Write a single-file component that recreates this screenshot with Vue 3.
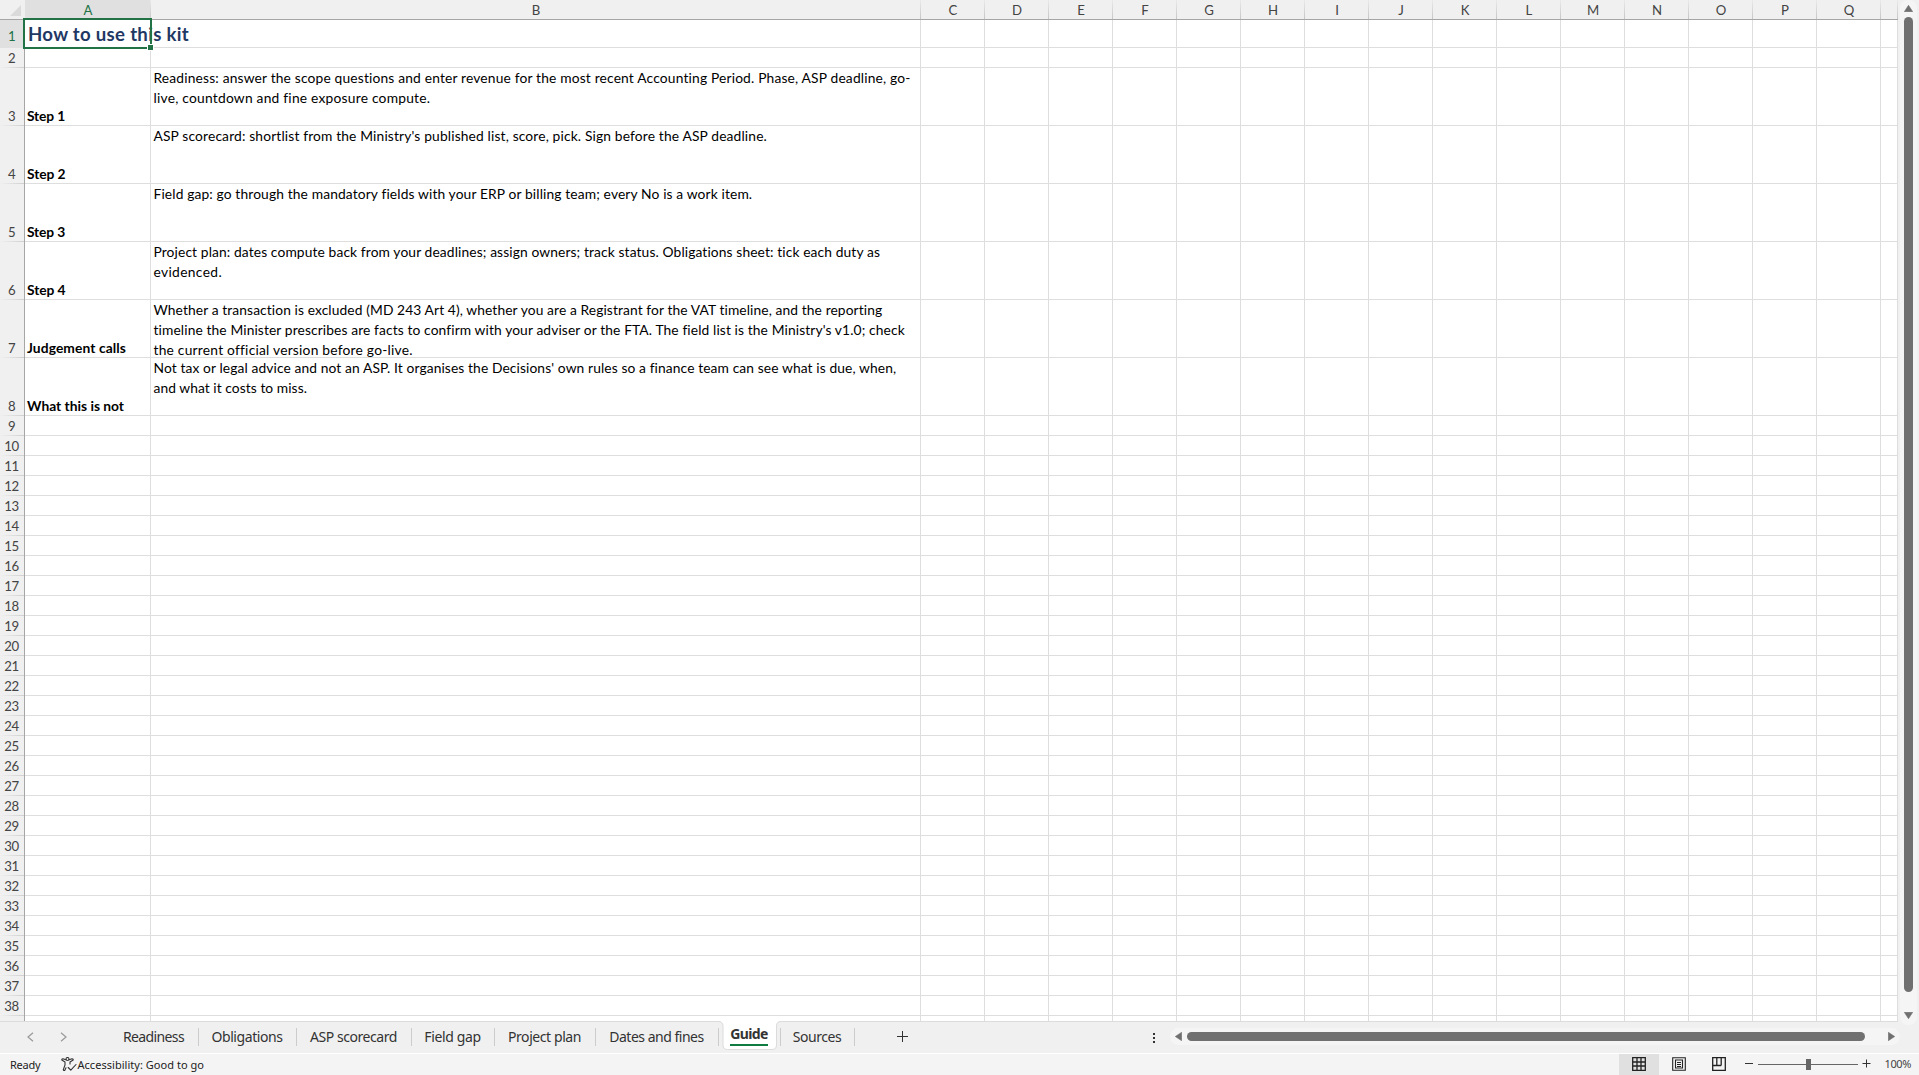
<script setup>
const columns = [
  { name: 'A', width: 126, active: true },
  { name: 'B', width: 770 },
  ...'CDEFGHIJKLMNOPQ'.split('').map((name) => ({ name, width: 64 })),
  { name: '', width: 17 },
]

const content = {
  1: { height: 28, title: 'How to use this kit' },
  3: {
    label: ['Step 1', 38],
    lines: [
      ['Readiness: answer the scope questions and enter revenue for the most recent Accounting Period. Phase, ASP deadline, go-', 757.5],
      ['live, countdown and fine exposure compute.', 276.5],
    ],
  },
  4: {
    label: ['Step 2', 38.5],
    lines: [["ASP scorecard: shortlist from the Ministry's published list, score, pick. Sign before the ASP deadline.", 613.5]],
  },
  5: {
    label: ['Step 3', 38],
    lines: [['Field gap: go through the mandatory fields with your ERP or billing team; every No is a work item.', 598.5]],
  },
  6: {
    label: ['Step 4', 38.5],
    lines: [
      ['Project plan: dates compute back from your deadlines; assign owners; track status. Obligations sheet: tick each duty as', 727],
      ['evidenced.', 68.5],
    ],
  },
  7: {
    label: ['Judgement calls', 99],
    lines: [
      ['Whether a transaction is excluded (MD 243 Art 4), whether you are a Registrant for the VAT timeline, and the reporting', 729.5],
      ["timeline the Minister prescribes are facts to confirm with your adviser or the FTA. The field list is the Ministry's v1.0; check", 751],
      ['the current official version before go-live.', 258.5],
    ],
  },
  8: {
    label: ['What this is not', 97],
    lines: [
      ["Not tax or legal advice and not an ASP. It organises the Decisions' own rules so a finance team can see what is due, when,", 742.5],
      ['and what it costs to miss.', 153.5],
    ],
  },
}

const rows = Array.from({ length: 39 }, (_, i) => {
  const n = i + 1
  const data = content[n] || {}
  return { n, ...data, height: data.height || (data.lines ? 58 : 20) }
})

const tabs = [
  { name: 'Readiness', text: 61, width: 89 },
  { name: 'Obligations', text: 71, width: 98 },
  { name: 'ASP scorecard', text: 87, width: 115 },
  { name: 'Field gap', text: 56.5, width: 83 },
  { name: 'Project plan', text: 73, width: 101 },
  { name: 'Dates and fines', text: 94.5, width: 123 },
  { name: 'Guide', text: 37.5, width: 62, active: true },
  { name: 'Sources', text: 48.5, width: 74 },
]

// Spreads a run of text over a known width by adjusting its tracking.
const vFit = {
  mounted(el, { value }) {
    const natural = el.getBoundingClientRect().width
    el.style.letterSpacing = (value - natural) / el.textContent.length + 'px'
  },
}
</script>

<template>
  <div class="app">
    <div class="work">
      <div class="sheet">
        <div class="head">
          <div class="corner"><svg width="11" height="11"><path d="M11 0V11H0Z" fill="#dadada" /></svg></div>
          <div
            v-for="(c, i) in columns"
            :key="i"
            class="colhead"
            :class="{ on: c.active }"
            :style="{ width: c.width + 'px' }"
          >{{ c.name }}</div>
        </div>
        <div v-for="r in rows" :key="r.n" class="row" :style="{ height: r.height + 'px' }">
          <div class="rowhead" :class="{ on: r.n === 1 }"><span v-if="r.n < 39">{{ r.n }}</span></div>
          <div
            v-for="(c, i) in columns"
            :key="i"
            class="cell"
            :class="{ first: i === 0, second: i === 1 }"
            :style="{ width: c.width + 'px' }"
          >
            <template v-if="i === 0">
              <span v-if="r.title" v-fit="162" class="title">{{ r.title }}</span>
              <span v-if="r.label" v-fit="r.label[1]" class="label">{{ r.label[0] }}</span>
            </template>
            <template v-if="i === 1 && r.lines">
              <div v-for="l in r.lines" :key="l[0]" class="line"><span v-fit="l[1]">{{ l[0] }}</span></div>
            </template>
          </div>
        </div>
        <div class="selection"><i></i></div>
      </div>
      <div class="vscroll">
        <svg class="up" width="9" height="7"><path d="M4.5 .3 8.7 6.7H.3Z" fill="#707070" stroke="#707070" stroke-width=".6" stroke-linejoin="round" /></svg>
        <div class="vthumb"></div>
        <svg class="down" width="9" height="7"><path d="M4.5 6.7 8.7 .3H.3Z" fill="#707070" stroke="#707070" stroke-width=".6" stroke-linejoin="round" /></svg>
      </div>
    </div>

    <div class="tabbar">
      <div class="nav">
        <svg width="7" height="10"><path d="M6 .8 1 5 6 9.2" /></svg>
        <svg width="7" height="10"><path d="M1 .8 6 5 1 9.2" /></svg>
      </div>
      <div
        v-for="t in tabs"
        :key="t.name"
        class="tab"
        :class="{ active: t.active }"
        :style="{ width: t.width + 'px' }"
      >
        <svg v-if="t.active" class="shape" width="64" height="30">
          <path d="M1 0Q5 .5 5 4.500V24Q5 28.500 9.500 28.500H54Q58.500 28.500 58.500 24V4.500Q58.500 .5 63 0Z" fill="#fff" />
          <path d="M0 .5Q5 .5 5 5V24Q5 28.500 9.500 28.500H54Q58.500 28.500 58.500 24V5Q58.500 .5 63 .5" fill="none" stroke="#dcdcdc" />
        </svg>
        <span v-fit="t.text" class="name">{{ t.name }}</span>
      </div>
      <svg class="plus" width="11" height="11"><path d="M5.500 0V11M0 5.500H11" stroke="#333" /></svg>
      <div class="dots"><i></i><i></i><i></i></div>
      <div class="hscroll">
        <svg width="7" height="9"><path d="M.3 4.500 6.700 .3V8.700Z" fill="#707070" stroke="#707070" stroke-width=".6" stroke-linejoin="round" /></svg>
        <div class="hthumb"></div>
        <svg class="right" width="7" height="9"><path d="M6.700 4.500 .3 .3V8.700Z" fill="#707070" stroke="#707070" stroke-width=".6" stroke-linejoin="round" /></svg>
      </div>
    </div>

    <div class="status">
      <span v-fit="30.5" class="ready">Ready</span>
      <svg class="access" width="16" height="15" fill="none" stroke="#333" stroke-width="1.1" stroke-linecap="round" stroke-linejoin="round">
        <circle cx="6.500" cy="2" r="1.500" />
        <path d="M4.800 2.700 2 1.700Q.5 1.700 .8 3L4 5V8L2.300 12.600Q2.500 13.900 3.700 13.400L5 10.800M8.200 2.700 11 1.700Q12.500 1.700 12.200 3L9 5V7" />
        <path d="M7.200 10.500 9.800 13.200 15 7.500" />
      </svg>
      <span v-fit="126.5" class="good">Accessibility: Good to go</span>
      <div class="views">
        <div class="view on">
          <svg width="14" height="14"><path d="M.7 .7H13.300V13.300H.7ZM5 .7V13.300M9 .7V13.300M.7 5H13.300M.7 9H13.300" /></svg>
        </div>
        <div class="view">
          <svg width="14" height="14"><path d="M.7 .7H13.300V13.300H.7ZM3.500 3H10.500V11H3.500ZM5 5.500H9M5 7.500H9M5 9.500H9" stroke-width="1.100" /></svg>
        </div>
        <div class="view">
          <svg width="14" height="14"><path d="M.7 .7H13.300V13.300H.7ZM4.800 .7V8.500M9.200 .7V8.500M.7 8.500H9.200" /></svg>
        </div>
      </div>
      <svg class="zoom" width="128" height="14">
        <path d="M1 6.500H9M118.500 6.500H126.500M122.500 2.500V10.500" stroke="#333" />
        <path d="M14 7.500H114" stroke="#666" />
        <rect x="62" y="2" width="5" height="11" fill="#666" />
      </svg>
      <span v-fit="26.5" class="percent">100%</span>
    </div>
  </div>
</template>

<style>
body {
  margin: 0;
  overflow: hidden;
}
</style>

<style scoped>
.app {
  width: 1919px;
  height: 1075px;
  display: flex;
  flex-direction: column;
  overflow: hidden;
  background: #f0f0f0;
  font-family: Lato, Carlito, sans-serif;
  font-size: 13.8px;
  color: #000;
}
.app * {
  box-sizing: border-box;
}
svg {
  display: block;
  flex: none;
}
.work {
  display: flex;
  height: 1022px;
  flex: none;
}
.sheet {
  position: relative;
  width: 1898px;
  height: 1022px;
  overflow: hidden;
  border-bottom: 1px solid #dcdcdc;
}
.head {
  display: flex;
  height: 20px;
  border-bottom: 1px solid #a6a6a6;
  background: #f0f0f0;
}
.corner {
  width: 25px;
  padding: 5px 0 0 10px;
  flex: none;
}
.colhead {
  flex: none;
  height: 19px;
  padding-left: 1px;
  line-height: 21px;
  font-size: 13.2px;
  text-align: center;
  color: #444;
  border-right: 1px solid;
  border-image: linear-gradient(#ececec, #c4c4c4) 1;
}
.colhead.on,
.rowhead.on {
  background: #e0e0e0;
  color: #217346;
}
.row {
  display: flex;
}
.rowhead {
  width: 25px;
  flex: none;
  display: flex;
  align-items: flex-end;
  justify-content: center;
  padding: 0 1px 1px 0;
  line-height: 18px;
  font-size: 13.2px;
  letter-spacing: -0.5px;
  color: #444;
  border-right: 1px solid #a6a6a6;
  background: linear-gradient(90deg, #f0f0f0, #cfcfcf) bottom / 100% 1px no-repeat #f0f0f0;
}
.rowhead.on {
  padding-bottom: 3px;
}
.cell {
  flex: none;
  height: 100%;
  overflow: hidden;
  background: #fff;
  border-right: 1px solid #dedede;
  border-bottom: 1px solid #dedede;
  white-space: nowrap;
}
.cell.first {
  display: flex;
  align-items: flex-end;
  padding-left: 2px;
  overflow: visible;
}
.cell.second {
  padding-left: 2.5px;
}
.label {
  font-weight: 700;
  line-height: 18px;
}
.title {
  position: relative;
  z-index: 1;
  padding-left: 1px;
  font-size: 18.6px;
  font-weight: 700;
  line-height: 26px;
  color: #1f3864;
}
.line {
  height: 20px;
  line-height: 20px;
}
.selection {
  position: absolute;
  z-index: 2;
  left: 23px;
  top: 18px;
  width: 129px;
  height: 31px;
  border: 2px solid #217346;
}
.selection i {
  position: absolute;
  right: -4px;
  bottom: -4px;
  width: 7px;
  height: 7px;
  background: #217346;
  border: 1px solid #fff;
}
.vscroll {
  display: flex;
  flex-direction: column;
  align-items: center;
  width: 17px;
  height: 1025px;
  margin-left: 2px;
  padding-top: 5px;
  border-radius: 8px;
  background: #f5f5f5;
}
.vthumb {
  width: 9px;
  height: 975px;
  margin: 5px 0 20px;
  border-radius: 4.5px;
  background: #707070;
}
.tabbar {
  display: flex;
  height: 31px;
  flex: none;
  font-family: "Noto Sans", "Open Sans", sans-serif;
  font-size: 14px;
  color: #333;
}
.nav {
  display: flex;
  gap: 26px;
  width: 110px;
  padding: 10px 0 0 27px;
}
.nav svg {
  fill: none;
  stroke: #999;
  stroke-width: 1.2;
}
.tab {
  position: relative;
  flex: none;
  height: 31px;
  display: flex;
  justify-content: center;
  padding-right: 2px;
  line-height: 30px;
  white-space: nowrap;
  background: linear-gradient(#cccccc, #cccccc) right 6px / 1px 18px no-repeat;
}
.tab.active {
  font-weight: 700;
  line-height: 23px;
}
.shape {
  position: absolute;
  left: -1px;
  top: -1px;
}
.name {
  position: relative;
}
.tab.active .name {
  height: 24px;
  border-bottom: 2px solid #107c41;
}
.plus {
  margin: 9px 0 0 42px;
}
.dots {
  display: flex;
  flex-direction: column;
  gap: 2px;
  margin: 11px 0 0 245px;
}
.dots i {
  width: 2px;
  height: 2px;
  background: #333;
}
.hscroll {
  display: flex;
  align-items: center;
  width: 730px;
  height: 17px;
  margin: 6px 0 0 15px;
  padding-left: 5px;
  border-radius: 8.5px;
  background: #f5f5f5;
}
.hthumb {
  width: 678px;
  height: 9px;
  margin: 0 23px 0 5px;
  border-radius: 4.5px;
  background: #707070;
}
.status {
  display: flex;
  height: 22px;
  flex: none;
  border-top: 1px solid #fff;
  background: #f4f4f4;
  font-family: "Noto Sans", "Open Sans", sans-serif;
  font-size: 11px;
  line-height: 22px;
  color: #222;
  white-space: nowrap;
}
.ready {
  margin-left: 10px;
}
.access {
  margin: 3px 0 0 20px;
}
.good {
  margin-left: 1px;
}
.views {
  display: flex;
  margin-left: auto;
}
.view {
  width: 40px;
  height: 21px;
  padding: 3px 0 0 13px;
}
.view.on {
  background: #e0e0e0;
}
.view svg {
  fill: none;
  stroke: #222;
  stroke-width: 1.3;
}
.zoom {
  margin: 3px 0 0 5px;
}
.percent {
  margin: 0 8px 0 13px;
  line-height: 20px;
  color: #444;
}
</style>
